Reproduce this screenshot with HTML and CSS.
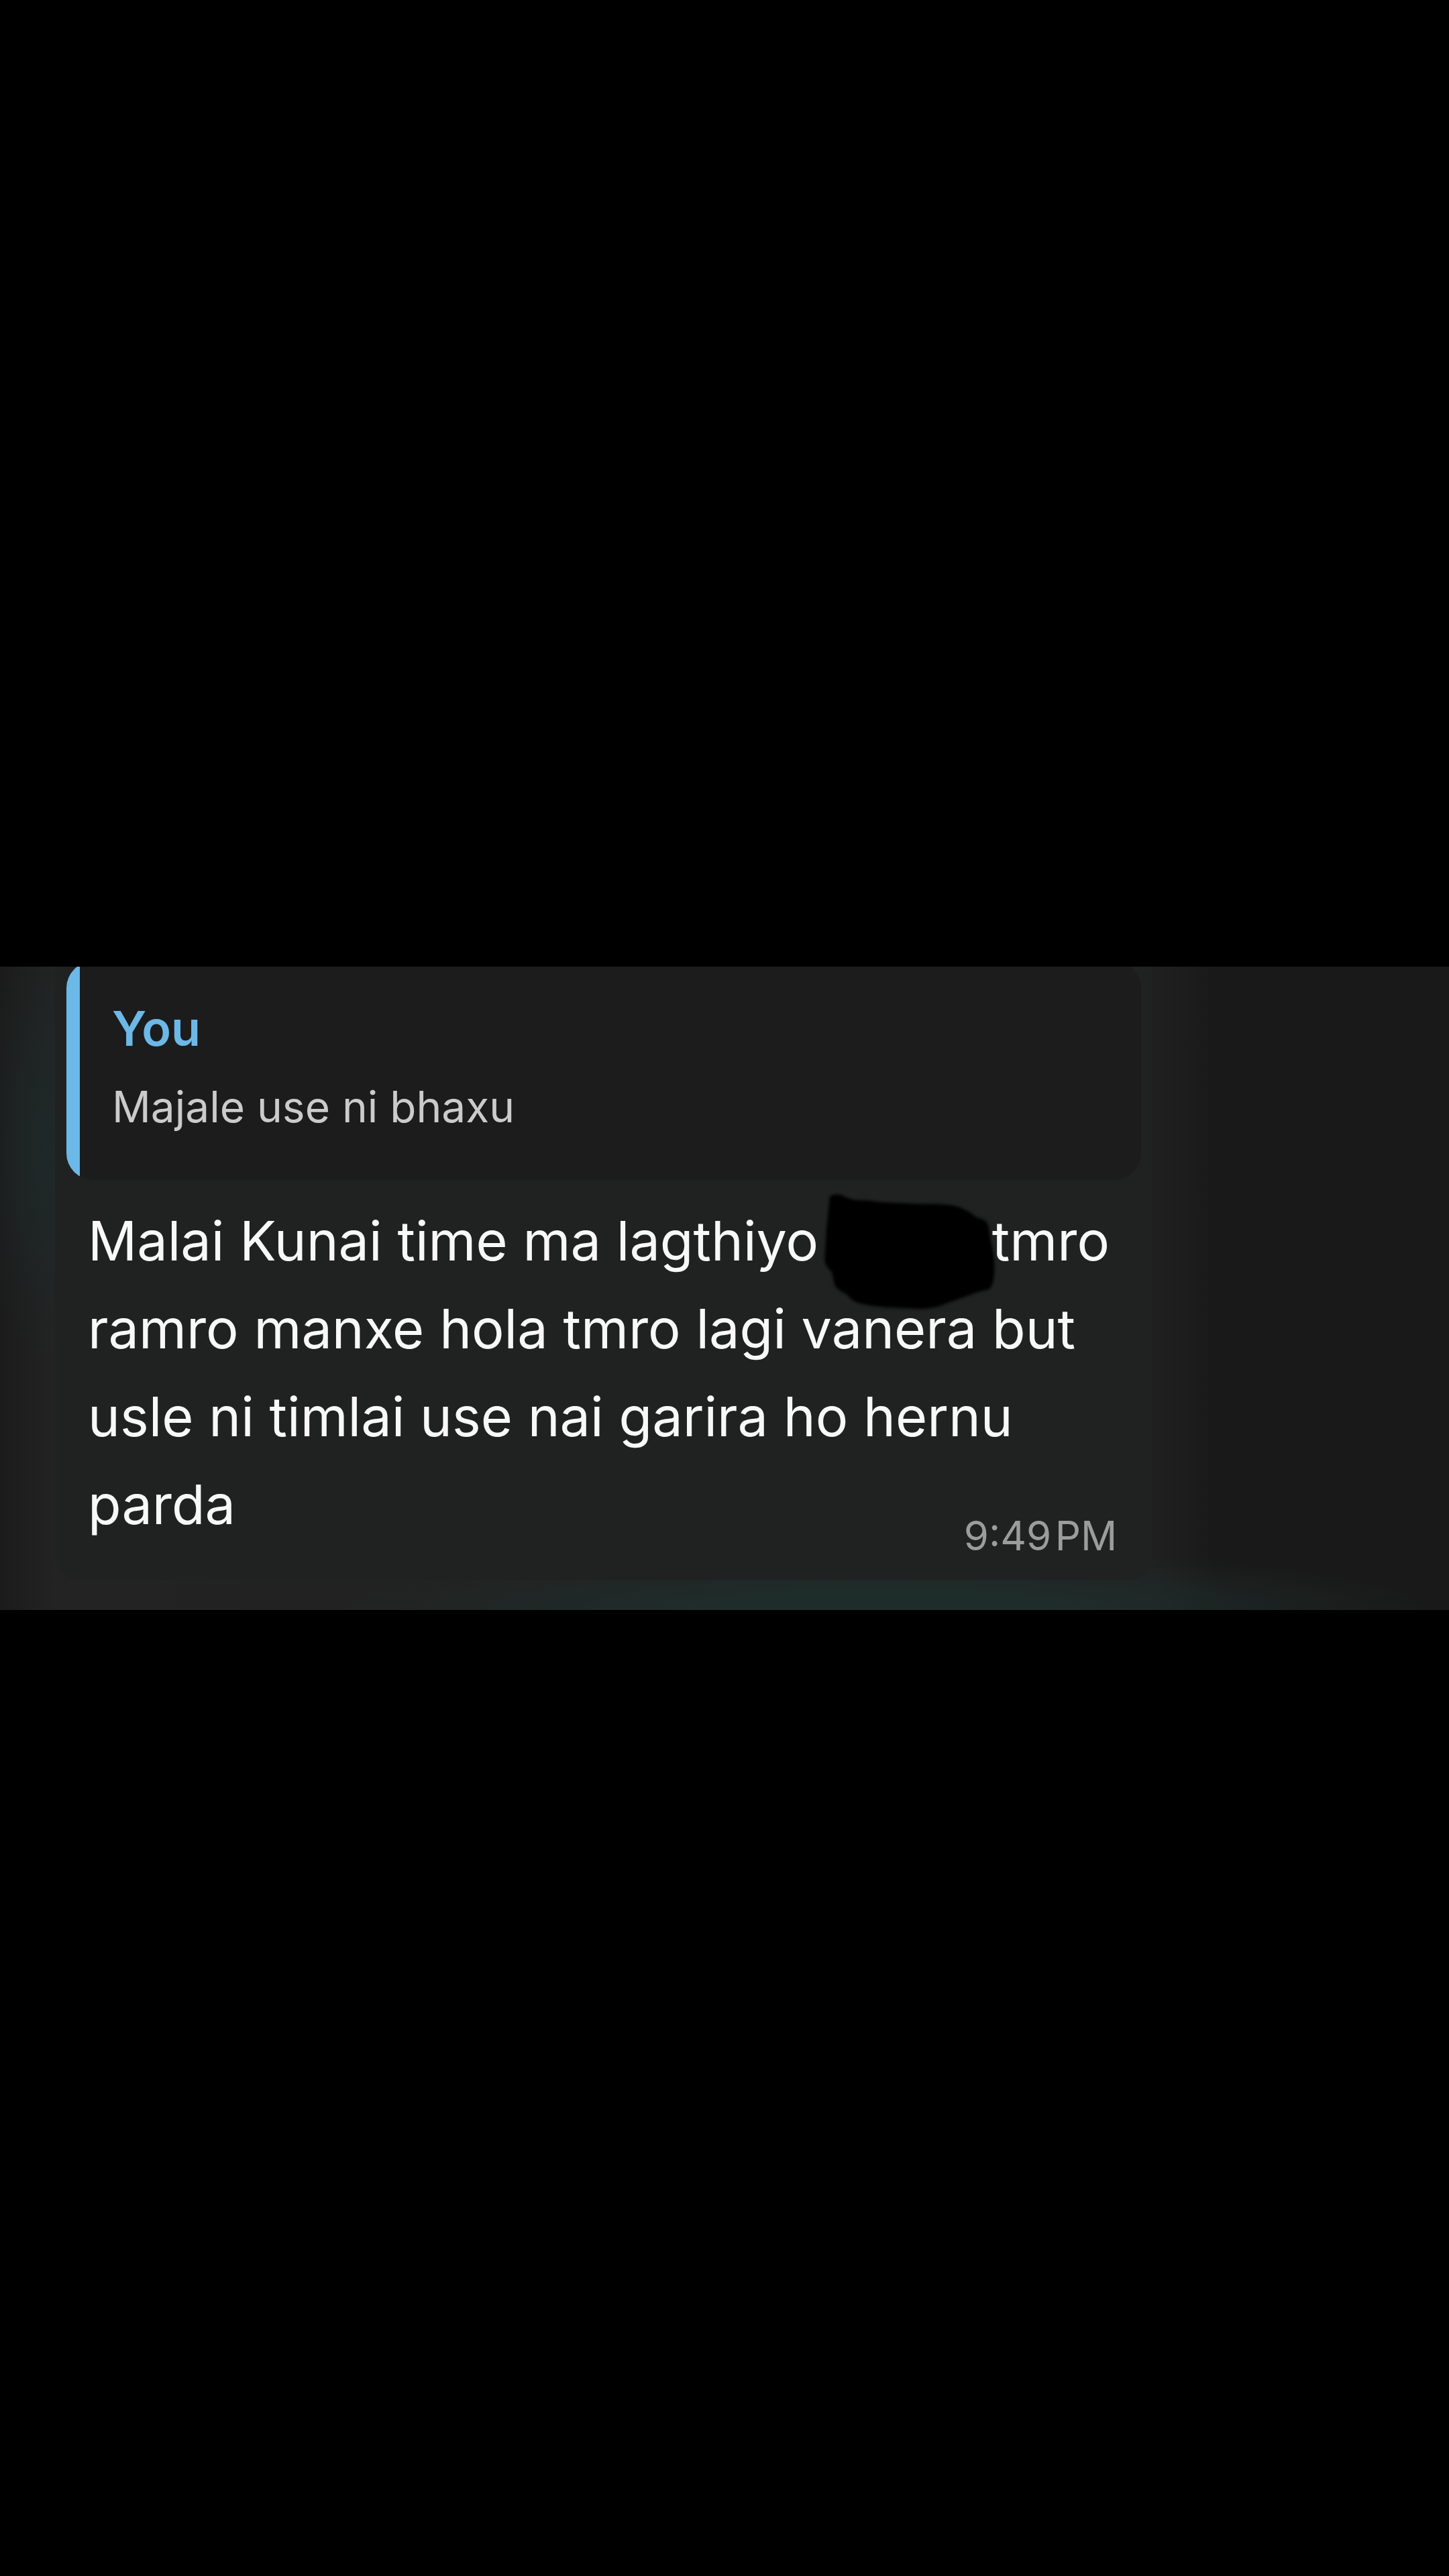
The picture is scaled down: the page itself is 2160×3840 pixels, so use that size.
FILE: index.html
```html
<!DOCTYPE html>
<html lang="ne-Latn">
  <head>
    <meta charset="UTF-8" />
    <meta name="viewport" content="width=device-width, initial-scale=1.0" />
    <title>Message</title>
    <link rel="stylesheet" href="styles.css">
  </head>
  <body>
    <main class="chat">
      <article class="bubble">
        <blockquote class="quote">
          <div class="quote-name">You</div>
          <div class="quote-text">Majale use ni bhaxu</div>
        </blockquote>

        <div class="message">
          <p class="message-text">
            Malai Kunai time ma lagthiyo
            <span class="redacted"><svg class="scribble" viewBox="0 0 270 190" aria-hidden="true">
              <path d="M18 14 Q27 9 37 13 Q48 19 59 20 Q77 20 94 23 L157 26 Q192 25 210 30 Q224 35 237 46 Q252 48 255 60 L258 82 Q265 106 263 130 Q262 148 255 153 Q240 156 228 161 L192 174 Q172 183 152 182 L103 180 Q76 178 59 173 Q49 169 43 160 Q28 154 25 146 Q23 136 21 127 Q12 120 10 110 L13 63 Z" />
            </svg></span>tmro ramro manxe hola tmro lagi vanera but usle ni timlai use nai garira ho hernu parda
          </p>
          <time class="time" datetime="21:49">9:49&#8202;PM</time>
        </div>
      </article>
    </main>
  </body>
</html>
```
FILE: styles.css
```css
* {
  box-sizing: border-box;
}

body {
  font-family: Inter, "Liberation Sans", sans-serif;
  background-color: #000;
  margin: 0;
  min-height: 100vh;
  display: flex;
  flex-direction: column;
  justify-content: center;
}

.chat {
  padding: 0 20.5% 45px 82px;
  overflow: hidden;
  background:
    radial-gradient(ellipse 38% 90px at 61% 100%, #1f2d2a 30%, transparent),
    radial-gradient(ellipse 100px 320px at 70px 28%, #1e2828, transparent),
    linear-gradient(90deg, #1b1b1b, #232323 80px, #202020 79.5%, #191919 84%, #191919);
}

.bubble {
  padding: 0 16px 26px 17px;
  background-color: #202221;
  border-radius: 0 0 36px 36px;
  isolation: isolate;
}

/* the top edge of the quote is scrolled just out of view */
.quote {
  margin: -8px 0 0;
  padding: 44px 28px 48px 68px;
  border-radius: 40px;
  background: linear-gradient(90deg, #6cb8e6 20px, #1c1c1c 20px);
}

.quote-name {
  color: #6cb8e6;
  font-size: 72px;
  font-weight: 600;
  line-height: 112px;
}

.quote-text {
  color: #cbcbcb;
  font-size: 64px;
  line-height: 122px;
}

.message {
  display: grid;
  padding: 26px 36px 0 32px;
}

.message-text {
  grid-area: 1 / 1;
  margin: 0 0 20px;
  color: #f8f8f8;
  font-size: 81px;
  line-height: 131px;
}

.redacted {
  position: relative;
  display: inline-block;
  width: 236px;
}

/* hand-drawn mark over the hidden name */
.scribble {
  position: absolute;
  left: -24px;
  bottom: -80px;
  z-index: -1;
  width: 270px;
  height: 190px;
  fill: #000;
  filter: blur(2px);
}

.time {
  grid-area: 1 / 1;
  place-self: end;
  color: #9c9c9c;
  font-size: 60px;
  line-height: 80px;
}
```
